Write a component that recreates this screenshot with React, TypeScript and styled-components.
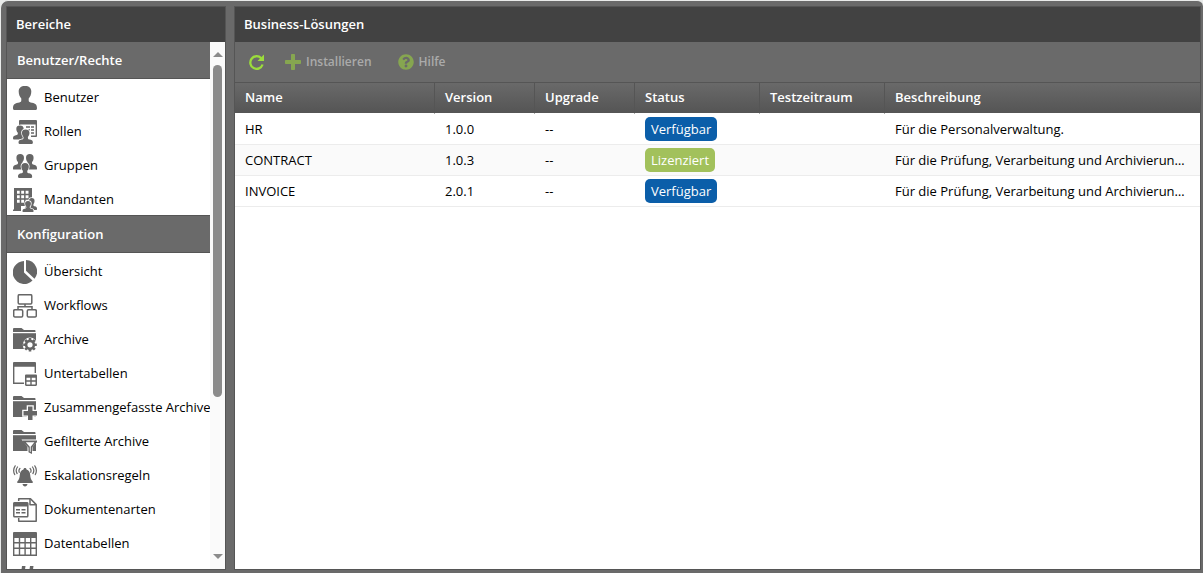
import React from "react";
import styled, { createGlobalStyle } from "styled-components";
import { FaQuestionCircle } from "react-icons/fa";

const GlobalStyle = createGlobalStyle`
  *, *::before, *::after { box-sizing: border-box; }
  body {
    margin: 0;
    background: #e9ebea;
    color: #000;
    font: 13px/18px "Open Sans", "Noto Sans", sans-serif;
  }
`;

const INK = "#666";

const Shell = styled.div`
  display: flex;
  gap: 8px;
  height: 100vh;
  overflow: hidden;
  padding: 5px 2px 3px 5px;
  background: #6a6a6a;
  border: solid #e9ebea;
  border-width: 1px 0 0 1px;
  border-radius: 8px 6px 0 0;
`;

const Panel = styled.section<{ $width?: number }>`
  display: flex;
  flex-direction: column;
  flex: ${(p) => (p.$width ? `0 0 ${p.$width}px` : "1 1 0")};
  min-width: 0;
  border: 1px solid #555;
  background: #fff;
`;

const PanelTitle = styled.h1`
  flex: none;
  height: 35px;
  margin: 0;
  padding: 0 9px;
  background: #424242;
  color: #fff;
  font-size: 13px;
  font-weight: 600;
  line-height: 35px;
`;

const PanelBody = styled.div`
  display: flex;
  flex: 1;
  min-height: 0;
`;

const Nav = styled.nav`
  flex: 1;
  min-width: 0;
  overflow: hidden;
`;

const GroupTitle = styled.h2<{ $divided?: boolean }>`
  margin: 0;
  padding: 0 10px;
  background: #6a6a6a;
  border: solid #555;
  border-width: ${(p) => (p.$divided ? "1px 0" : "0 0 1px")};
  color: #fff;
  font-size: 13px;
  font-weight: 600;
  line-height: 36px;
`;

const NavList = styled.ul`
  margin: 0;
  padding: 0;
  list-style: none;
`;

const NavLink = styled.a`
  display: flex;
  align-items: flex-start;
  gap: 7px;
  height: 34px;
  padding: 7px 0 0 6px;
  color: #000;
  text-decoration: none;
  white-space: nowrap;
  line-height: 22px;

  svg { flex: none; }
`;

const ScrollBar = styled.div`
  display: flex;
  flex-direction: column;
  flex: 0 0 15px;
  padding: 10px 2px 10px 3px;
  background: #fafafa;
`;

const ScrollTrack = styled.div`
  flex: 1;
  padding: 8px 0;
`;

const ScrollThumb = styled.div`
  width: 9px;
  height: 69%;
  border-radius: 5px;
  background: #8b8b8b;
`;

const ScrollArrow = styled.span<{ $down?: boolean }>`
  border: solid transparent;
  border-width: ${(p) => (p.$down ? "5px 5px 0" : "0 5px 5px")};
  border-${(p) => (p.$down ? "top" : "bottom")}-color: #8b8b8b;
`;

const Toolbar = styled.div`
  display: flex;
  align-items: center;
  flex: none;
  gap: 20px;
  height: 40px;
  padding: 0 14px;
  background: #6a6a6a;
`;

const ToolButton = styled.button`
  display: flex;
  align-items: center;
  gap: 5px;
  padding: 0;
  border: 0;
  background: none;
  color: #9bdc3c;
  font: inherit;
  font-size: 12px;
  font-weight: 600;

  &:disabled { color: #86a650; }
  &:disabled span { color: #aaa; }
  & + & + & { margin-left: 6px; }
`;

const Table = styled.table`
  width: 100%;
  table-layout: fixed;
  border-collapse: separate;
  border-spacing: 0;
`;

const Col = styled.col<{ $width?: number }>`
  width: ${(p) => (p.$width ? `${p.$width}px` : "auto")};
`;

const HeadRow = styled.tr`
  background: linear-gradient(#6a6a6a, #545454);
`;

const HeadCell = styled.th`
  height: 32px;
  padding: 0 10px 2px;
  border-top: 1px solid #555;
  border-bottom: 1px solid #fff;
  border-right: 1px solid #555;
  color: #fff;
  font-weight: 600;
  text-align: left;

  &:last-child { border-right: 0; }
`;

const BodyRow = styled.tr`
  &:nth-child(even) { background: #fafafa; }
`;

const Cell = styled.td`
  height: 31px;
  padding: 0 10px;
  border-bottom: 1px solid #ececec;
  overflow: hidden;
  text-overflow: ellipsis;
  white-space: nowrap;
`;

const Badge = styled.span<{ $tone: string }>`
  display: block;
  width: fit-content;
  padding: 0 6px;
  border-radius: 5px;
  background: ${(p) => p.$tone};
  color: #fff;
  line-height: 24px;
`;

const Icon = ({ children }: { children: React.ReactNode }) => (
  <svg width="24" height="24" viewBox="0 0 24 24" fill={INK} aria-hidden="true">
    {children}
  </svg>
);

const PERSON =
  "M12 0c4.100 0 6.300 2 6.300 5.600 0 3-1 5.200-2.600 6.800v2c0 1.400 1.300 1.900 3.300 2.300C22.800 17.500 24 19 24 22.200c0 1.200-.500 1.800-1.600 1.800H1.600C.500 24 0 23.400 0 22.200 0 19 1.200 17.500 5 16.700 7 16.300 8.300 15.800 8.300 14.400v-2C6.700 10.800 5.700 8.600 5.700 5.600 5.700 2 7.900 0 12 0z";

const Person = ({ x, y, s, sy = s, halo }: { x: number; y: number; s: number; sy?: number; halo?: boolean }) => (
  <path
    d={PERSON}
    transform={`translate(${x} ${y}) scale(${s} ${sy})`}
    stroke={halo ? "#fff" : "none"}
    strokeWidth={halo ? 1.5 / s : 0}
    paintOrder="stroke"
  />
);

const Folder = () => (
  <>
    <path d="M0 4V1.200C0 .500.500 0 1.200 0H8.500l2.500 2H21.500c.700 0 1 .400 1 1v1z" />
    <path d="M0 5.200h23V21H0z" />
  </>
);

const UserIcon = () => (
  <Icon>
    <Person x={0} y={0} s={1} />
  </Icon>
);

const RolesIcon = () => (
  <Icon>
    <path d="M6 1.200C6 .500 6.500 0 7.200 0h15.600C23.500 0 24 .500 24 1.200V16c0 .700-.500 1-1.200 1H18v-1.400h4.600V4.600H7.400V7H6z" />
    <path d="M13 6.300h4v1.400h-4zM18 6.300h3v1.400h-3zM15 9.300h2v1.400h-2zM18 9.300h3v1.400h-3zM18 12.300h3v1.400h-3z" />
    <Person x={0} y={5.500} s={0.580} halo />
    <Person x={5.500} y={9.500} s={0.600} halo />
  </Icon>
);

const GroupsIcon = () => (
  <Icon>
    <Person x={0} y={0} s={0.600} sy={0.650} />
    <Person x={9.600} y={0} s={0.600} sy={0.650} />
    <Person x={5} y={9} s={0.590} sy={0.620} halo />
  </Icon>
);

const TenantsIcon = () => (
  <Icon>
    <path
      fillRule="evenodd"
      d="M1 0h18v22h-7v-4H8v5H0v-1.600h1zM4 2.800v2.900h2.700V2.800zm4.200 0v2.900h2.900V2.800zm4.400 0v2.900h2.900V2.800zM4 7.300v2.900h2.700V7.300zm4.200 0v2.900h2.900V7.300zm4.400 0v2.900h2.900V7.300zM4 11.800v2.900h2.700v-2.900zm4.200 0v2.900h2.900v-2.900zm4.400 0v2.900h2.900v-2.900z"
    />
    <Person x={13.500} y={10} s={0.440} sy={0.500} halo />
    <Person x={9.500} y={13} s={0.460} sy={0.460} halo />
  </Icon>
);

const PieIcon = () => (
  <Icon>
    <path d="M11 1A11.500 11.500 0 1 0 19.500 20.500L11 12.500z" />
    <path d="M13 0A11.500 11.500 0 0 1 21.500 18.700L13 10.800z" />
  </Icon>
);

const WorkflowIcon = () => (
  <Icon>
    <g fill="none" stroke={INK} strokeWidth="1.500">
      <rect x="5.200" y=".700" width="13.600" height="9.300" rx="1.200" />
      <rect x=".700" y="15.700" width="9" height="7.300" rx="1.200" />
      <rect x="14.300" y="15.700" width="9" height="7.300" rx="1.200" />
      <path d="M12 10v2.800M5 15.700v-2.900h14v2.900" />
    </g>
  </Icon>
);

const ArchiveIcon = () => (
  <Icon>
    <Folder />
    <circle cx="17" cy="16.800" r="7.200" fill="#fff" />
    <circle cx="17" cy="16.800" r="3.900" fill="none" stroke={INK} strokeWidth="2.600" />
    <g stroke={INK} strokeWidth="2.600">
      <path d="M17 10v2.500M17 21.100v2.500M10.200 16.800h2.500M21.300 16.800h2.500M12.200 12l1.800 1.800M20 19.800l1.800 1.800M12.200 21.600l1.800-1.800M20 13.800l1.800-1.800" />
    </g>
  </Icon>
);

const SubTableIcon = () => (
  <Icon>
    <path d="M0 1.200C0 .500.500 0 1.200 0h20.600c.700 0 1.200.500 1.200 1.200V11h-1.400V4.800H1.400v15.800H11V22H0z" />
    <path
      fillRule="evenodd"
      d="M13.200 12.500h9.600c.700 0 1.200.500 1.200 1.200v9.100c0 .700-.500 1.200-1.200 1.200h-9.600c-.700 0-1.200-.500-1.200-1.200v-9.100c0-.700.500-1.200 1.200-1.200zm.300 3.200v2.600h3.800v-2.600zm5.200 0v2.600h3.800v-2.600zm-5.200 4v2.800h3.800v-2.800zm5.200 0v2.800h3.800v-2.800z"
    />
  </Icon>
);

const FolderPlusIcon = () => (
  <Icon>
    <Folder />
    <path d="M15 10.500h4.500v4.500H24v4.500h-4.500V24H15v-4.500h-4.500V15H15z" stroke="#fff" strokeWidth="2.600" paintOrder="stroke" />
  </Icon>
);

const FolderFilterIcon = () => (
  <Icon>
    <Folder />
    <path d="M8.500 9.500H25.500L19.500 17V25H14.500V17z" fill="#fff" />
    <path
      fillRule="evenodd"
      d="M9.500 10.500h14.500v1.400L19 17.500V24l-3.500-1.800v-4.700L9.500 11.900zm3.300 1.700 4 4.600V21.500l.900.500v-5.200l3.700-4.600z"
    />
  </Icon>
);

const BellIcon = () => (
  <Icon>
    <path d="M12 4c1 0 1.500.600 1.500 1.500 2.500.700 3.500 2.800 3.700 5.500.200 3 .900 5 2.500 6.400V19H4.300v-1.600C5.900 16 6.600 14 6.800 11c.200-2.700 1.200-4.800 3.700-5.500C10.500 4.600 11 4 12 4zM9.500 20h5c-.300 1.500-1.200 2.400-2.500 2.400S9.800 21.500 9.500 20z" />
    <g fill="none" stroke={INK} strokeWidth="1.200" strokeLinecap="round">
      <path d="M6.900 4.500C5.800 5.500 5.800 7 6.300 8.300M4.500 3C3 5 3 7.800 4.100 9.600M2.200 1.800C.300 4.500.300 7.800 1.700 10.600" />
      <path d="M17.100 4.500c1.100 1 1.100 2.500.600 3.800M19.500 3c1.500 2 1.500 4.800.400 6.600M21.800 1.800c1.900 2.700 1.900 6 .500 8.800" />
    </g>
  </Icon>
);

const DocumentIcon = () => (
  <Icon>
    <g fill="none" stroke={INK} strokeWidth="1.500" strokeLinejoin="round">
      <path d="M5.700 3V.800H17.500l5.700 5.800v16.600H5.700V20" />
      <path d="M17 .800v6h6" />
      <rect x=".800" y="4.800" width="14" height="14" rx=".800" />
    </g>
    <path d="M.500 4.500h14.600v4H.500zM3 11h4v1.500H3zM8.500 11h4v1.500h-4zM3 14h4v1.500H3zM8.500 14h4v1.500h-4z" />
  </Icon>
);

const TableIcon = () => (
  <Icon>
    <path
      fillRule="evenodd"
      d="M1.200 0h21.600c.700 0 1.200.500 1.200 1.200V24H0V1.200C0 .500.500 0 1.200 0zM1.400 6v4h4.400V6zm5.800 0v4h4.200V6zm5.600 0v4H17V6zm5.600 0v4h4.200V6zM1.400 11.500v4h4.400v-4zm5.800 0v4h4.200v-4zm5.600 0v4H17v-4zm5.600 0v4h4.200v-4zM1.400 17v5.600h4.400V17zm5.800 0v5.600h4.200V17zm5.600 0v5.600H17V17zm5.600 0v5.600h4.200V17z"
    />
  </Icon>
);

const NumberIcon = () => (
  <Icon>
    <path d="M9 0h3.500L9 24H5.500zM17 0h3.500L17 24h-3.500z" />
  </Icon>
);

const ReloadIcon = () => (
  <svg width="16" height="16" viewBox="0 0 16 16" aria-hidden="true">
    <path d="M12.200 4.200A6.300 6.300 0 1 0 13.600 10.500" fill="none" stroke="currentColor" strokeWidth="2.300" />
    <path d="M15 .500V7H8.500z" fill="currentColor" />
  </svg>
);

const PlusIcon = () => (
  <svg width="16" height="16" viewBox="0 0 16 16" fill="currentColor" aria-hidden="true">
    <path d="M7 0h2c.600 0 1 .400 1 1v5h5c.600 0 1 .400 1 1v2c0 .600-.400 1-1 1h-5v5c0 .600-.400 1-1 1H7c-.600 0-1-.400-1-1v-5H1c-.600 0-1-.400-1-1V7c0-.600.400-1 1-1h5V1c0-.600.400-1 1-1z" />
  </svg>
);

type Entry = { label: string; icon: React.ReactNode };

const groups: { title: string; entries: Entry[] }[] = [
  {
    title: "Benutzer/Rechte",
    entries: [
      { label: "Benutzer", icon: <UserIcon /> },
      { label: "Rollen", icon: <RolesIcon /> },
      { label: "Gruppen", icon: <GroupsIcon /> },
      { label: "Mandanten", icon: <TenantsIcon /> },
    ],
  },
  {
    title: "Konfiguration",
    entries: [
      { label: "Übersicht", icon: <PieIcon /> },
      { label: "Workflows", icon: <WorkflowIcon /> },
      { label: "Archive", icon: <ArchiveIcon /> },
      { label: "Untertabellen", icon: <SubTableIcon /> },
      { label: "Zusammengefasste Archive", icon: <FolderPlusIcon /> },
      { label: "Gefilterte Archive", icon: <FolderFilterIcon /> },
      { label: "Eskalationsregeln", icon: <BellIcon /> },
      { label: "Dokumentenarten", icon: <DocumentIcon /> },
      { label: "Datentabellen", icon: <TableIcon /> },
      { label: "", icon: <NumberIcon /> },
    ],
  },
];

const columns: { title: string; width?: number }[] = [
  { title: "Name", width: 200 },
  { title: "Version", width: 100 },
  { title: "Upgrade", width: 100 },
  { title: "Status", width: 125 },
  { title: "Testzeitraum", width: 125 },
  { title: "Beschreibung" },
];

const tones: Record<string, string> = {
  Verfügbar: "#0b5ea9",
  Lizenziert: "#a2c15c",
};

const longText = "Für die Prüfung, Verarbeitung und Archivierung von Dokumenten.";

const solutions = [
  { name: "HR", version: "1.0.0", status: "Verfügbar", text: "Für die Personalverwaltung." },
  { name: "CONTRACT", version: "1.0.3", status: "Lizenziert", text: longText },
  { name: "INVOICE", version: "2.0.1", status: "Verfügbar", text: longText },
];

export default function App() {
  return (
    <>
      <GlobalStyle />
      <Shell>
        <Panel $width={220}>
          <PanelTitle>Bereiche</PanelTitle>
          <PanelBody>
            <Nav aria-label="Bereiche">
              {groups.map((group, index) => (
                <React.Fragment key={group.title}>
                  <GroupTitle $divided={index > 0}>{group.title}</GroupTitle>
                  <NavList>
                    {group.entries.map((entry) => (
                      <li key={entry.label}>
                        <NavLink href="#">
                          {entry.icon}
                          {entry.label}
                        </NavLink>
                      </li>
                    ))}
                  </NavList>
                </React.Fragment>
              ))}
            </Nav>
            <ScrollBar aria-hidden="true">
              <ScrollArrow />
              <ScrollTrack>
                <ScrollThumb />
              </ScrollTrack>
              <ScrollArrow $down />
            </ScrollBar>
          </PanelBody>
        </Panel>
        <Panel>
          <PanelTitle>Business-Lösungen</PanelTitle>
          <Toolbar>
            <ToolButton type="button" aria-label="Aktualisieren">
              <ReloadIcon />
            </ToolButton>
            <ToolButton type="button" disabled>
              <PlusIcon />
              <span>Installieren</span>
            </ToolButton>
            <ToolButton type="button" disabled>
              <FaQuestionCircle size={16} aria-hidden="true" />
              <span>Hilfe</span>
            </ToolButton>
          </Toolbar>
          <Table>
            <colgroup>
              {columns.map((column) => (
                <Col key={column.title} $width={column.width} />
              ))}
            </colgroup>
            <thead>
              <HeadRow>
                {columns.map((column) => (
                  <HeadCell key={column.title} scope="col">
                    {column.title}
                  </HeadCell>
                ))}
              </HeadRow>
            </thead>
            <tbody>
              {solutions.map((item) => (
                <BodyRow key={item.name}>
                  <Cell>{item.name}</Cell>
                  <Cell>{item.version}</Cell>
                  <Cell>--</Cell>
                  <Cell>
                    <Badge $tone={tones[item.status]}>{item.status}</Badge>
                  </Cell>
                  <Cell />
                  <Cell>{item.text}</Cell>
                </BodyRow>
              ))}
            </tbody>
          </Table>
        </Panel>
      </Shell>
    </>
  );
}
